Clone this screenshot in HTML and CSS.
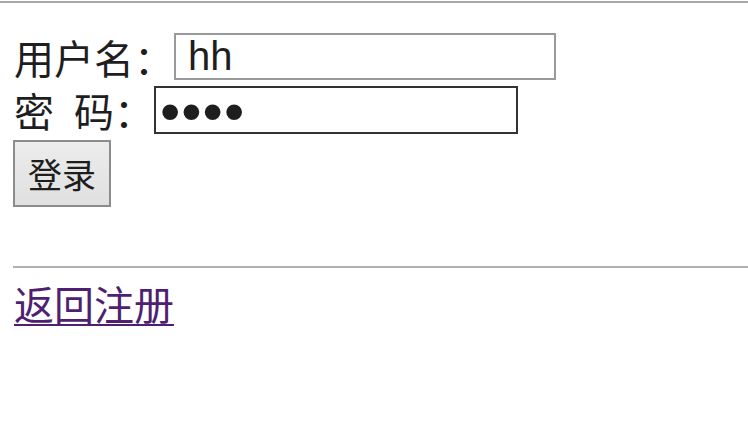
FILE: index.html
```html
<!DOCTYPE html>
<html lang="zh-CN">

<head>
    <meta charset="UTF-8">
    <title>登录</title>
    <link rel="stylesheet" href="styles.css">
</head>

<body>
    <div class="topline"></div>

    <form class="login" method="POST" action="/login">
        <div class="row">
            <label for="username">用户名：</label>
            <input class="field user" type="text" name="username" id="username" value="hh">
        </div>
        <div class="row">
            <label for="password">密&#8194;码：</label>
            <input class="field pass" type="password" name="password" id="password" value="1234">
        </div>
        <div class="row">
            <button class="submit" type="submit">登录</button>
        </div>
    </form>

    <hr class="divider">

    <a class="back" href="#">返回注册</a>
</body>

</html>
```

FILE: styles.css
```css
body {
    margin: 0;
    font-family: "Noto Sans CJK SC", sans-serif;
    font-size: 40px;
    color: #1e1e1e;
    background: #fff;
}

.topline {
    height: 2px;
    margin-top: 1px;
    background-color: #a8a8a8;
}

.login {
    display: flex;
    flex-direction: column;
    gap: 6px;
    padding: 30px 0 0 14px;
}

.row {
    display: flex;
    align-items: center;
}

.row label {
    line-height: 40px;
}

.field {
    box-sizing: border-box;
    height: 48px;
    margin: 0;
    font-family: "Liberation Sans", Arial, sans-serif;
    font-size: 40px;
    color: #1e1e1e;
    background: #fff;
    outline: none;
}

.user {
    width: 382px;
    height: 47px;
    padding: 0 12px;
    border: 2px solid #999;
}

.pass {
    width: 364px;
    padding: 0 4px;
    border: 2px solid #333;
    font-size: 58px;
    letter-spacing: 1px;
}

.submit {
    box-sizing: border-box;
    width: 98px;
    height: 67px;
    margin-left: -1px;
    padding: 0;
    font-family: "Noto Sans CJK SC", sans-serif;
    font-size: 34px;
    color: #1e1e1e;
    background: linear-gradient(#ececec, #e0e0e0);
    border: 2px solid #8c8c8c;
}

.divider {
    margin: 59px 0 0 13px;
    height: 0;
    border: none;
    border-top: 2px solid #b0b0b0;
}

.back {
    display: inline-block;
    margin: 13px 0 0 14px;
    line-height: 44px;
    color: #4e1f72;
    text-decoration: underline;
    text-underline-offset: 4px;
    text-decoration-thickness: 2px;
}
```
